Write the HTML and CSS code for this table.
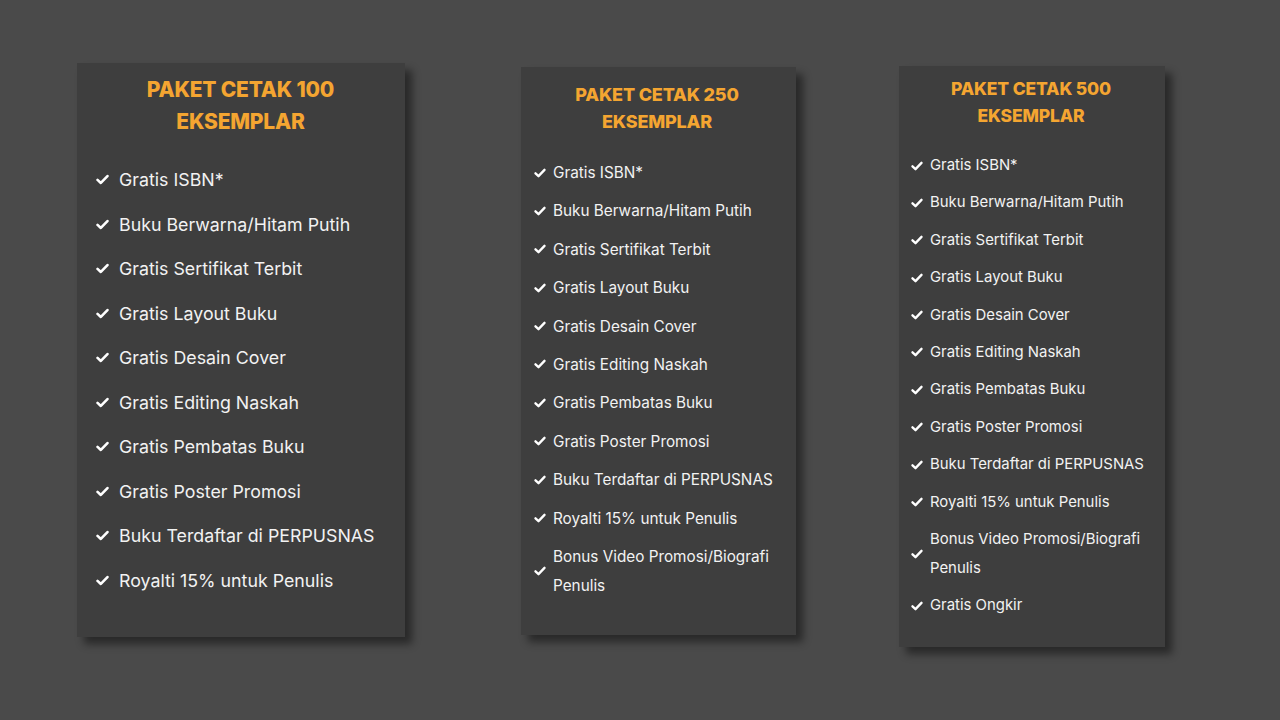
FILE: index.html
```html
<!DOCTYPE html>
<html lang="en">
  <head>
    <meta charset="UTF-8" />
    <meta name="viewport" content="width=device-width, initial-scale=1.0" />
    <title>Paket Cetak Buku</title>
    <link rel="stylesheet" href="styles.css">
  </head>
  <body>
    <svg style="display: none">
      <symbol id="check" viewBox="0 0 14 12">
        <path d="M1.6 6.4 L5.2 9.8 L12.4 2.2" fill="none" stroke="currentColor" stroke-width="2.8" stroke-linecap="round" stroke-linejoin="round" />
      </symbol>
    </svg>

    <main class="pricing">
      <div class="card card-100">
        <h2 class="card-title">PAKET CETAK 100<br />EKSEMPLAR</h2>
        <ul class="features">
          <li><svg class="tick"><use href="#check" /></svg><span>Gratis ISBN*</span></li>
          <li><svg class="tick"><use href="#check" /></svg><span>Buku Berwarna/Hitam Putih</span></li>
          <li><svg class="tick"><use href="#check" /></svg><span>Gratis Sertifikat Terbit</span></li>
          <li><svg class="tick"><use href="#check" /></svg><span>Gratis Layout Buku</span></li>
          <li><svg class="tick"><use href="#check" /></svg><span>Gratis Desain Cover</span></li>
          <li><svg class="tick"><use href="#check" /></svg><span>Gratis Editing Naskah</span></li>
          <li><svg class="tick"><use href="#check" /></svg><span>Gratis Pembatas Buku</span></li>
          <li><svg class="tick"><use href="#check" /></svg><span>Gratis Poster Promosi</span></li>
          <li><svg class="tick"><use href="#check" /></svg><span>Buku Terdaftar di PERPUSNAS</span></li>
          <li><svg class="tick"><use href="#check" /></svg><span>Royalti 15% untuk Penulis</span></li>
        </ul>
      </div>

      <div class="card card-250">
        <h2 class="card-title">PAKET CETAK 250<br />EKSEMPLAR</h2>
        <ul class="features">
          <li><svg class="tick"><use href="#check" /></svg><span>Gratis ISBN*</span></li>
          <li><svg class="tick"><use href="#check" /></svg><span>Buku Berwarna/Hitam Putih</span></li>
          <li><svg class="tick"><use href="#check" /></svg><span>Gratis Sertifikat Terbit</span></li>
          <li><svg class="tick"><use href="#check" /></svg><span>Gratis Layout Buku</span></li>
          <li><svg class="tick"><use href="#check" /></svg><span>Gratis Desain Cover</span></li>
          <li><svg class="tick"><use href="#check" /></svg><span>Gratis Editing Naskah</span></li>
          <li><svg class="tick"><use href="#check" /></svg><span>Gratis Pembatas Buku</span></li>
          <li><svg class="tick"><use href="#check" /></svg><span>Gratis Poster Promosi</span></li>
          <li><svg class="tick"><use href="#check" /></svg><span>Buku Terdaftar di PERPUSNAS</span></li>
          <li><svg class="tick"><use href="#check" /></svg><span>Royalti 15% untuk Penulis</span></li>
          <li><svg class="tick"><use href="#check" /></svg><span>Bonus Video Promosi/Biografi Penulis</span></li>
        </ul>
      </div>

      <div class="card card-500">
        <h2 class="card-title">PAKET CETAK 500<br />EKSEMPLAR</h2>
        <ul class="features">
          <li><svg class="tick"><use href="#check" /></svg><span>Gratis ISBN*</span></li>
          <li><svg class="tick"><use href="#check" /></svg><span>Buku Berwarna/Hitam Putih</span></li>
          <li><svg class="tick"><use href="#check" /></svg><span>Gratis Sertifikat Terbit</span></li>
          <li><svg class="tick"><use href="#check" /></svg><span>Gratis Layout Buku</span></li>
          <li><svg class="tick"><use href="#check" /></svg><span>Gratis Desain Cover</span></li>
          <li><svg class="tick"><use href="#check" /></svg><span>Gratis Editing Naskah</span></li>
          <li><svg class="tick"><use href="#check" /></svg><span>Gratis Pembatas Buku</span></li>
          <li><svg class="tick"><use href="#check" /></svg><span>Gratis Poster Promosi</span></li>
          <li><svg class="tick"><use href="#check" /></svg><span>Buku Terdaftar di PERPUSNAS</span></li>
          <li><svg class="tick"><use href="#check" /></svg><span>Royalti 15% untuk Penulis</span></li>
          <li><svg class="tick"><use href="#check" /></svg><span>Bonus Video Promosi/Biografi Penulis</span></li>
          <li><svg class="tick"><use href="#check" /></svg><span>Gratis Ongkir</span></li>
        </ul>
      </div>
    </main>
  </body>
</html>
```

FILE: styles.css
```css
body {
  margin: 0;
  padding: 0;
  background: #4a4a4a;
  font-family: "Inter", "Roboto", sans-serif;
  color: #f2f2f2;
  height: 720px;
  overflow: hidden;
}
.pricing {
  display: flex;
  align-items: flex-start;
  padding-left: 77px;
}
.card {
  background-color: #3e3e3e;
  box-shadow: 7px 7px 8px rgba(0, 0, 0, 0.45);
  box-sizing: border-box;
}
.card-title {
  margin: 0;
  text-align: center;
  color: #f4a531;
  font-weight: 800;
  letter-spacing: -0.01em;
}
.features {
  list-style: none;
  margin: 0;
  padding: 0;
  display: flex;
  flex-direction: column;
}
.features li {
  display: flex;
  align-items: center;
}
.tick {
  flex: none;
  color: #fff;
}

/* 100 */
.card-100 {
  width: 328px;
  margin-top: 63px;
  padding: 11px 20px 40px 19px;
  font-size: 17.8px;
}
.card-100 .card-title {
  font-size: 21px;
  line-height: 32px;
  margin-bottom: 25px;
}
.card-100 .features {
  gap: 11px;
}
.card-100 .features li {
  line-height: 33.5px;
}
.card-100 .tick {
  width: 13px;
  height: 11px;
  margin-right: 10px;
}

/* 250 */
.card-250 {
  width: 275px;
  margin-top: 67px;
  margin-left: 116px;
  padding: 14px 16px 35px 13px;
  font-size: 15.3px;
}
.card-250 .card-title {
  font-size: 18px;
  line-height: 27px;
  margin-bottom: 23px;
}
.card-250 .features {
  gap: 9.4px;
}
.card-250 .features li {
  line-height: 29px;
}
.card-250 .tick {
  width: 12px;
  height: 10px;
  margin-right: 7px;
}

/* 500 */
.card-500 {
  width: 266px;
  margin-top: 66px;
  margin-left: 103px;
  padding: 9px 14px 27px 12px;
  font-size: 14.9px;
}
.card-500 .card-title {
  font-size: 17.5px;
  line-height: 27px;
  margin-bottom: 22px;
}
.card-500 .features {
  gap: 8.4px;
}
.card-500 .features li {
  line-height: 29px;
}
.card-500 .tick {
  width: 12px;
  height: 10px;
  margin-right: 7px;
}
```
